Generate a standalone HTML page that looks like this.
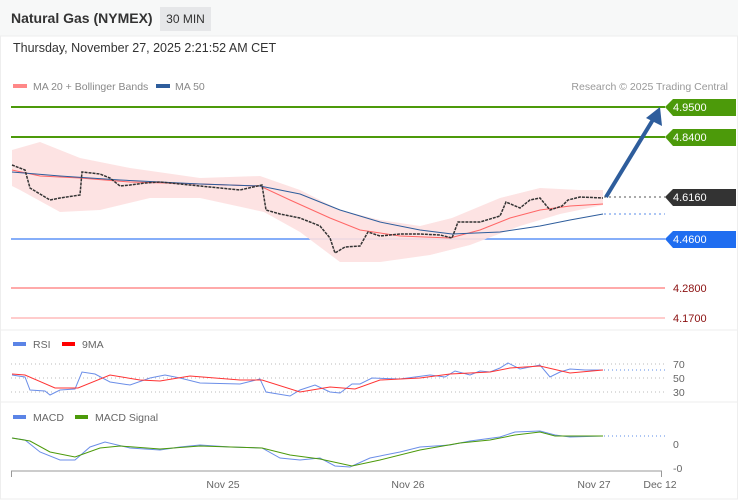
<!DOCTYPE html>
<html><head><meta charset="utf-8"><style>
body{margin:0;width:738px;height:500px;background:#fff;font-family:"Liberation Sans",sans-serif;overflow:hidden;position:relative}
.hdr{position:absolute;left:0;top:0;width:738px;height:36px;background:#f7f8f8}
.t{position:absolute;left:11px;top:10px;font-size:14px;font-weight:bold;color:#333}
.tf{position:absolute;left:160px;top:7px;width:51px;height:24px;background:#e6e7e9;font-size:12px;color:#333;text-align:center;line-height:24px}
.dt{position:absolute;left:13px;top:41px;font-size:12.5px;color:#333}
</style></head><body>
<div class="hdr"></div><div class="t">Natural Gas (NYMEX)</div><div class="tf">30 MIN</div>
<div class="dt">Thursday, November 27, 2025 2:21:52 AM CET</div>
<svg width="738" height="500" style="position:absolute;left:0;top:0" font-family="Liberation Sans" font-size="10.5">
<rect x="0.5" y="36" width="737" height="463" fill="none" stroke="#eee"/>
<rect x="13" y="84" width="14" height="4" fill="#f88"/><text x="33" y="90" fill="#888">MA 20 + Bollinger Bands</text>
<rect x="156" y="84" width="14" height="4" fill="#2e5d9c"/><text x="175" y="90" fill="#888">MA 50</text>
<text x="728" y="90" fill="#999" text-anchor="end">Research © 2025 Trading Central</text>
<line x1="11" y1="107" x2="665" y2="107" stroke="#4c9a0a" stroke-width="2"/>
<line x1="11" y1="137" x2="665" y2="137" stroke="#4c9a0a" stroke-width="2"/>
<line x1="11" y1="239" x2="665" y2="239" stroke="#3d7ef5" stroke-width="1.3"/>
<line x1="11" y1="288" x2="665" y2="288" stroke="#f55" stroke-width="1"/>
<line x1="11" y1="318" x2="665" y2="318" stroke="#f99" stroke-width="1"/>
<path d="M665 107l8-8h63v17h-63z" fill="#4c9a0a"/><text x="673" y="111" fill="#fff" font-size="11">4.9500</text>
<path d="M665 137l8-8h63v17h-63z" fill="#4c9a0a"/><text x="673" y="141" fill="#fff" font-size="11">4.8400</text>
<path d="M665 197l8-8h63v17h-63z" fill="#333"/><text x="673" y="201" fill="#fff" font-size="11">4.6160</text>
<path d="M665 239l8-8h63v17h-63z" fill="#1f6df0"/><text x="673" y="243" fill="#fff" font-size="11">4.4600</text>
<text x="673" y="292" fill="#8b1010" font-size="11">4.2800</text>
<text x="673" y="322" fill="#8b1010" font-size="11">4.1700</text>
<path d="M12 150 L40 142 L80 158 L130 168 L200 178 L260 176 L300 190 L340 210 L380 220 L420 226 L452 218 L500 198 L540 188 L580 190 L603 190 L603 205 L560 214 L520 226 L470 245 L430 255 L380 262 L340 262 L300 232 L264 212 L200 198 L150 198 L100 210 L60 212 L20 190 L12 186Z" fill="#fde0e0" opacity="0.9"/>
<polyline points="12,170 40,176 80,178 130,182 200,184 260,186 290,200 330,218 360,230 400,236 450,238 480,230 510,218 540,210 570,206 603,204" fill="none" stroke="#f66" stroke-width="1"/>
<polyline points="12,172 60,176 120,180 200,184 260,186 300,194 340,210 380,222 420,230 452,234 500,232 540,226 570,220 603,214" fill="none" stroke="#2e5d9c" stroke-width="1"/>
<polyline points="12,165 25,170 30,188 50,200 60,198 80,195 82,172 100,174 110,178 120,186 130,185 145,183 160,182 180,184 200,186 220,188 240,190 262,185 266,210 280,214 300,218 320,226 330,238 335,253 345,247 360,246 368,232 380,236 400,234 420,234 440,235 452,238 458,222 480,222 500,216 506,202 520,208 530,200 540,198 550,210 562,206 568,200 580,197 603,198" fill="none" stroke="#333" stroke-width="1.5" stroke-dasharray="3,1"/>
<line x1="604" y1="197" x2="665" y2="197" stroke="#555" stroke-dasharray="2,3"/>
<line x1="604" y1="214" x2="665" y2="214" stroke="#5b8de8" stroke-dasharray="2,3"/>
<line x1="606" y1="197" x2="654" y2="118" stroke="#2e5d9c" stroke-width="4"/>
<path d="M660 107 L662 126 L646 118Z" fill="#2e5d9c"/>
<line x1="0" y1="330" x2="738" y2="330" stroke="#eee"/>
<line x1="0" y1="402" x2="738" y2="402" stroke="#eee"/>
<rect x="13" y="342" width="13" height="4" fill="#5b84e6"/><text x="33" y="348" fill="#666">RSI</text>
<rect x="62" y="342" width="13" height="4" fill="#f00"/><text x="82" y="348" fill="#666">9MA</text>
<g stroke="#bbb" stroke-dasharray="1,3"><line x1="11" y1="364" x2="665" y2="364"/><line x1="11" y1="378" x2="665" y2="378"/><line x1="11" y1="392" x2="665" y2="392"/></g>
<text x="673" y="368" fill="#666">70</text><text x="673" y="382" fill="#666">50</text><text x="673" y="396" fill="#666">30</text>
<polyline points="12,375 25,377 30,390 45,391 50,395 60,390 75,389 82,372 95,374 110,382 130,385 150,378 165,375 180,378 200,383 240,384 260,379 266,392 290,396 300,390 315,385 330,392 340,393 352,384 360,384 372,378 400,379 430,375 445,377 455,371 470,375 480,371 490,372 500,368 508,363 520,369 540,365 550,377 560,372 570,369 585,370 603,370" fill="none" stroke="#6b8ee8" stroke-width="1"/>
<polyline points="12,374 25,375 55,388 78,388 110,375 140,380 160,381 190,376 240,380 262,380 300,392 330,387 355,389 380,380 420,378 450,374 490,372 510,368 540,366 570,373 603,370" fill="none" stroke="#f33" stroke-width="1"/>
<line x1="604" y1="370" x2="665" y2="370" stroke="#5b8de8" stroke-dasharray="1,3"/>
<rect x="13" y="415" width="13" height="4" fill="#5b84e6"/><text x="33" y="421" fill="#666">MACD</text>
<rect x="75" y="415" width="13" height="4" fill="#4c9a0a"/><text x="95" y="421" fill="#666">MACD Signal</text>
<text x="673" y="448" fill="#666">0</text><text x="673" y="472" fill="#666">-0</text>
<polyline points="12,438 25,440 40,452 60,460 75,460 90,447 105,442 130,448 160,450 180,447 200,445 230,447 262,448 280,458 300,460 320,458 335,466 350,467 370,458 400,452 420,447 450,445 470,441 500,437 515,432 540,431 555,435 570,437 603,436" fill="none" stroke="#6b8ee8" stroke-width="1"/>
<polyline points="12,438 30,441 50,452 75,457 100,448 120,446 160,449 200,446 262,448 290,455 320,459 352,466 380,460 420,450 460,443 490,440 515,435 540,432 555,436 570,436 603,436" fill="none" stroke="#4c9a0a" stroke-width="1"/>
<line x1="604" y1="436" x2="665" y2="436" stroke="#5b8de8" stroke-dasharray="1,3"/>
<line x1="11" y1="471" x2="662" y2="471" stroke="#999"/>
<line x1="11.5" y1="471" x2="11.5" y2="477" stroke="#999"/><line x1="661.5" y1="471" x2="661.5" y2="477" stroke="#999"/>
<g fill="#666" text-anchor="middle"><text x="223" y="488">Nov 25</text><text x="408" y="488">Nov 26</text><text x="594" y="488">Nov 27</text><text x="660" y="488">Dec 12</text></g>
</svg>
</body></html>
